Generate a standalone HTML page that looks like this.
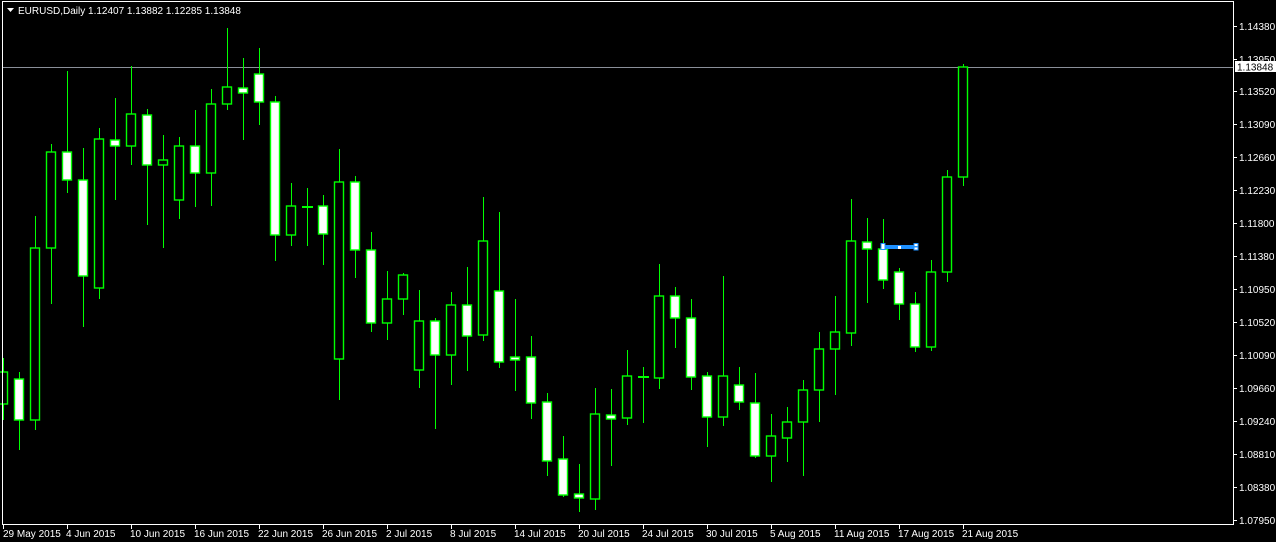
<!DOCTYPE html>
<html><head><meta charset="utf-8"><style>
html,body{margin:0;padding:0;background:#000;width:1276px;height:542px;overflow:hidden}
svg{position:absolute;left:0;top:0}
text{font-family:"Liberation Sans",sans-serif;font-size:10px;fill:#fff}
line.wk{stroke:#00ff00;stroke-width:1}
rect.b{fill:#000;stroke:#00ff00;stroke-width:1.4}
rect.w{fill:#fff;stroke:#00ff00;stroke-width:1.4}
</style></head><body>
<svg width="1276" height="542" viewBox="0 0 1276 542">
<rect x="0" y="0" width="1276" height="542" fill="#000"/>
<line x1="2" y1="67.5" x2="1233" y2="67.5" stroke="#8a8f99" stroke-width="1"/>
<g id="c">
<line class="wk" x1="3.5" y1="358" x2="3.5" y2="420"/><rect class="b" x="-1.5" y="372" width="9" height="32"/>
<line class="wk" x1="19.5" y1="372" x2="19.5" y2="450"/><rect class="w" x="14.5" y="379" width="9" height="41"/>
<line class="wk" x1="35.5" y1="216" x2="35.5" y2="430"/><rect class="b" x="30.5" y="248" width="9" height="172"/>
<line class="wk" x1="51.5" y1="144" x2="51.5" y2="304"/><rect class="b" x="46.5" y="152" width="9" height="96"/>
<line class="wk" x1="67.5" y1="71" x2="67.5" y2="193"/><rect class="w" x="62.5" y="152" width="9" height="28"/>
<line class="wk" x1="83.5" y1="148" x2="83.5" y2="327"/><rect class="w" x="78.5" y="180" width="9" height="96"/>
<line class="wk" x1="99.5" y1="128" x2="99.5" y2="299"/><rect class="b" x="94.5" y="139" width="9" height="149"/>
<line class="wk" x1="115.5" y1="98" x2="115.5" y2="200"/><rect class="w" x="110.5" y="140" width="9" height="6"/>
<line class="wk" x1="131.5" y1="66" x2="131.5" y2="165"/><rect class="b" x="126.5" y="114" width="9" height="32"/>
<line class="wk" x1="147.5" y1="109" x2="147.5" y2="225"/><rect class="w" x="142.5" y="115" width="9" height="50"/>
<line class="wk" x1="163.5" y1="135" x2="163.5" y2="248"/><rect class="b" x="158.5" y="160" width="9" height="5"/>
<line class="wk" x1="179.5" y1="137" x2="179.5" y2="219"/><rect class="b" x="174.5" y="146" width="9" height="54"/>
<line class="wk" x1="195.5" y1="110" x2="195.5" y2="207"/><rect class="w" x="190.5" y="146" width="9" height="27"/>
<line class="wk" x1="211.5" y1="89" x2="211.5" y2="206"/><rect class="b" x="206.5" y="104" width="9" height="69"/>
<line class="wk" x1="227.5" y1="28" x2="227.5" y2="110"/><rect class="b" x="222.5" y="87" width="9" height="17"/>
<line class="wk" x1="243.5" y1="58" x2="243.5" y2="140"/><rect class="w" x="238.5" y="88" width="9" height="5"/>
<line class="wk" x1="259.5" y1="48" x2="259.5" y2="125"/><rect class="w" x="254.5" y="74" width="9" height="28"/>
<line class="wk" x1="275.5" y1="96" x2="275.5" y2="261"/><rect class="w" x="270.5" y="102" width="9" height="133"/>
<line class="wk" x1="291.5" y1="183" x2="291.5" y2="246"/><rect class="b" x="286.5" y="206" width="9" height="29"/>
<line class="wk" x1="307.5" y1="188" x2="307.5" y2="246"/><rect fill="#00ff00" x="302" y="206" width="11" height="2"/>
<line class="wk" x1="323.5" y1="195" x2="323.5" y2="265"/><rect class="w" x="318.5" y="206" width="9" height="28"/>
<line class="wk" x1="339.5" y1="149" x2="339.5" y2="400"/><rect class="b" x="334.5" y="182" width="9" height="177"/>
<line class="wk" x1="355.5" y1="176" x2="355.5" y2="278"/><rect class="w" x="350.5" y="182" width="9" height="68"/>
<line class="wk" x1="371.5" y1="232" x2="371.5" y2="332"/><rect class="w" x="366.5" y="250" width="9" height="73"/>
<line class="wk" x1="387.5" y1="271" x2="387.5" y2="340"/><rect class="b" x="382.5" y="299" width="9" height="24"/>
<line class="wk" x1="403.5" y1="273" x2="403.5" y2="315"/><rect class="b" x="398.5" y="275" width="9" height="24"/>
<line class="wk" x1="419.5" y1="290" x2="419.5" y2="388"/><rect class="b" x="414.5" y="321" width="9" height="49"/>
<line class="wk" x1="435.5" y1="318" x2="435.5" y2="429"/><rect class="w" x="430.5" y="321" width="9" height="34"/>
<line class="wk" x1="451.5" y1="292" x2="451.5" y2="385"/><rect class="b" x="446.5" y="305" width="9" height="50"/>
<line class="wk" x1="467.5" y1="267" x2="467.5" y2="371"/><rect class="w" x="462.5" y="305" width="9" height="31"/>
<line class="wk" x1="483.5" y1="197" x2="483.5" y2="341"/><rect class="b" x="478.5" y="241" width="9" height="94"/>
<line class="wk" x1="499.5" y1="212" x2="499.5" y2="368"/><rect class="w" x="494.5" y="291" width="9" height="71"/>
<line class="wk" x1="515.5" y1="299" x2="515.5" y2="391"/><rect class="w" x="510.5" y="357" width="9" height="3"/>
<line class="wk" x1="531.5" y1="336" x2="531.5" y2="419"/><rect class="w" x="526.5" y="357" width="9" height="46"/>
<line class="wk" x1="547.5" y1="393" x2="547.5" y2="476"/><rect class="w" x="542.5" y="402" width="9" height="59"/>
<line class="wk" x1="563.5" y1="436" x2="563.5" y2="497"/><rect class="w" x="558.5" y="459" width="9" height="36"/>
<line class="wk" x1="579.5" y1="464" x2="579.5" y2="512"/><rect class="w" x="574.5" y="494" width="9" height="4"/>
<line class="wk" x1="595.5" y1="388" x2="595.5" y2="510"/><rect class="b" x="590.5" y="414" width="9" height="85"/>
<line class="wk" x1="611.5" y1="389" x2="611.5" y2="466"/><rect class="w" x="606.5" y="415" width="9" height="4"/>
<line class="wk" x1="627.5" y1="350" x2="627.5" y2="425"/><rect class="b" x="622.5" y="376" width="9" height="42"/>
<line class="wk" x1="643.5" y1="367" x2="643.5" y2="423"/><rect fill="#00ff00" x="638" y="376" width="11" height="2"/>
<line class="wk" x1="659.5" y1="264" x2="659.5" y2="389"/><rect class="b" x="654.5" y="296" width="9" height="82"/>
<line class="wk" x1="675.5" y1="287" x2="675.5" y2="348"/><rect class="w" x="670.5" y="296" width="9" height="22"/>
<line class="wk" x1="691.5" y1="299" x2="691.5" y2="390"/><rect class="w" x="686.5" y="318" width="9" height="59"/>
<line class="wk" x1="707.5" y1="372" x2="707.5" y2="447"/><rect class="w" x="702.5" y="376" width="9" height="41"/>
<line class="wk" x1="723.5" y1="276" x2="723.5" y2="426"/><rect class="b" x="718.5" y="376" width="9" height="41"/>
<line class="wk" x1="739.5" y1="367" x2="739.5" y2="410"/><rect class="w" x="734.5" y="385" width="9" height="17"/>
<line class="wk" x1="755.5" y1="373" x2="755.5" y2="458"/><rect class="w" x="750.5" y="403" width="9" height="53"/>
<line class="wk" x1="771.5" y1="414" x2="771.5" y2="482"/><rect class="b" x="766.5" y="436" width="9" height="20"/>
<line class="wk" x1="787.5" y1="407" x2="787.5" y2="462"/><rect class="b" x="782.5" y="422" width="9" height="16"/>
<line class="wk" x1="803.5" y1="380" x2="803.5" y2="476"/><rect class="b" x="798.5" y="390" width="9" height="32"/>
<line class="wk" x1="819.5" y1="332" x2="819.5" y2="422"/><rect class="b" x="814.5" y="349" width="9" height="41"/>
<line class="wk" x1="835.5" y1="296" x2="835.5" y2="395"/><rect class="b" x="830.5" y="332" width="9" height="17"/>
<line class="wk" x1="851.5" y1="199" x2="851.5" y2="346"/><rect class="b" x="846.5" y="241" width="9" height="92"/>
<line class="wk" x1="867.5" y1="218" x2="867.5" y2="303"/><rect class="w" x="862.5" y="242" width="9" height="7"/>
<line class="wk" x1="883.5" y1="219" x2="883.5" y2="289"/><rect class="w" x="878.5" y="249" width="9" height="31"/>
<line class="wk" x1="899.5" y1="268" x2="899.5" y2="320"/><rect class="w" x="894.5" y="272" width="9" height="32"/>
<line class="wk" x1="915.5" y1="292" x2="915.5" y2="352"/><rect class="w" x="910.5" y="304" width="9" height="43"/>
<line class="wk" x1="931.5" y1="260" x2="931.5" y2="351"/><rect class="b" x="926.5" y="272" width="9" height="75"/>
<line class="wk" x1="947.5" y1="170" x2="947.5" y2="282"/><rect class="b" x="942.5" y="177" width="9" height="95"/>
<line class="wk" x1="963.5" y1="64" x2="963.5" y2="186"/><rect class="b" x="958.5" y="67" width="9" height="110"/>
</g>
<rect x="882" y="245" width="35" height="4" fill="#1e90ff"/>
<rect x="881" y="243.5" width="4" height="6" fill="#fff" stroke="#1e90ff" stroke-width="1"/>
<rect x="898" y="246" width="3" height="3" fill="#fff"/>
<rect x="914" y="243.5" width="4" height="3" fill="#fff" stroke="#1e90ff" stroke-width="1"/>
<rect x="914" y="247" width="4" height="3" fill="#fff" stroke="#1e90ff" stroke-width="1"/>
<line x1="2.5" y1="1" x2="2.5" y2="525" stroke="#fff"/>
<line x1="2" y1="1.5" x2="1234" y2="1.5" stroke="#fff"/>
<line x1="1233.5" y1="1" x2="1233.5" y2="525" stroke="#fff"/>
<line x1="2" y1="524.5" x2="1234" y2="524.5" stroke="#fff"/>
<polygon points="7,8 14,8 10.5,12" fill="#fff"/>
<text x="18" y="14">EURUSD,Daily  1.12407 1.13882 1.12285 1.13848</text>
<g stroke="#fff">
<line x1="1234" y1="26.5" x2="1237" y2="26.5"/><line x1="1234" y1="59.5" x2="1237" y2="59.5"/><line x1="1234" y1="91.5" x2="1237" y2="91.5"/><line x1="1234" y1="124.5" x2="1237" y2="124.5"/><line x1="1234" y1="157.5" x2="1237" y2="157.5"/><line x1="1234" y1="190.5" x2="1237" y2="190.5"/><line x1="1234" y1="223.5" x2="1237" y2="223.5"/><line x1="1234" y1="256.5" x2="1237" y2="256.5"/><line x1="1234" y1="289.5" x2="1237" y2="289.5"/><line x1="1234" y1="322.5" x2="1237" y2="322.5"/><line x1="1234" y1="355.5" x2="1237" y2="355.5"/><line x1="1234" y1="388.5" x2="1237" y2="388.5"/><line x1="1234" y1="421.5" x2="1237" y2="421.5"/><line x1="1234" y1="454.5" x2="1237" y2="454.5"/><line x1="1234" y1="487.5" x2="1237" y2="487.5"/><line x1="1234" y1="520.5" x2="1237" y2="520.5"/>
</g>
<g>
<text x="1239" y="30">1.14380</text><text x="1239" y="63">1.13950</text><text x="1239" y="95">1.13520</text><text x="1239" y="128">1.13090</text><text x="1239" y="161">1.12660</text><text x="1239" y="194">1.12230</text><text x="1239" y="227">1.11800</text><text x="1239" y="260">1.11380</text><text x="1239" y="293">1.10950</text><text x="1239" y="326">1.10520</text><text x="1239" y="359">1.10090</text><text x="1239" y="392">1.09660</text><text x="1239" y="425">1.09240</text><text x="1239" y="458">1.08810</text><text x="1239" y="491">1.08380</text><text x="1239" y="524">1.07950</text>
</g>
<rect x="1235" y="61" width="41" height="11" fill="#fff"/>
<text x="1237" y="70.5" style="fill:#000">1.13848</text>
<g stroke="#fff">
<line x1="3.5" y1="525" x2="3.5" y2="529"/><line x1="67.5" y1="525" x2="67.5" y2="529"/><line x1="131.5" y1="525" x2="131.5" y2="529"/><line x1="195.5" y1="525" x2="195.5" y2="529"/><line x1="259.5" y1="525" x2="259.5" y2="529"/><line x1="323.5" y1="525" x2="323.5" y2="529"/><line x1="387.5" y1="525" x2="387.5" y2="529"/><line x1="451.5" y1="525" x2="451.5" y2="529"/><line x1="515.5" y1="525" x2="515.5" y2="529"/><line x1="579.5" y1="525" x2="579.5" y2="529"/><line x1="643.5" y1="525" x2="643.5" y2="529"/><line x1="707.5" y1="525" x2="707.5" y2="529"/><line x1="771.5" y1="525" x2="771.5" y2="529"/><line x1="835.5" y1="525" x2="835.5" y2="529"/><line x1="899.5" y1="525" x2="899.5" y2="529"/><line x1="963.5" y1="525" x2="963.5" y2="529"/>
</g>
<g>
<text x="3" y="537">29 May 2015</text><text x="66" y="537">4 Jun 2015</text><text x="130" y="537">10 Jun 2015</text><text x="194" y="537">16 Jun 2015</text><text x="258" y="537">22 Jun 2015</text><text x="322" y="537">26 Jun 2015</text><text x="386" y="537">2 Jul 2015</text><text x="450" y="537">8 Jul 2015</text><text x="514" y="537">14 Jul 2015</text><text x="578" y="537">20 Jul 2015</text><text x="642" y="537">24 Jul 2015</text><text x="706" y="537">30 Jul 2015</text><text x="770" y="537">5 Aug 2015</text><text x="834" y="537">11 Aug 2015</text><text x="898" y="537">17 Aug 2015</text><text x="962" y="537">21 Aug 2015</text>
</g>
</svg>
</body></html>
